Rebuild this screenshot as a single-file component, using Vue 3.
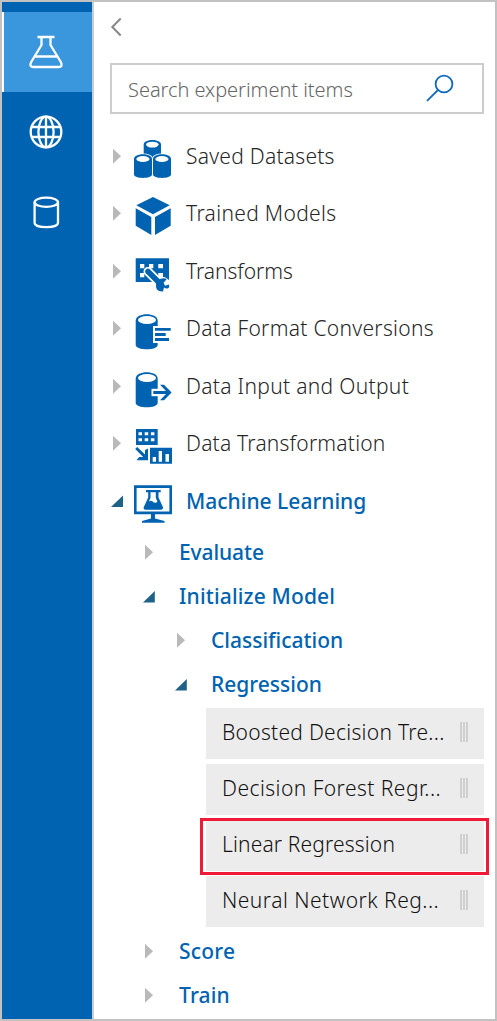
<script setup>
const categories = [
  { label: 'Saved Datasets', icon: 'datasets', ls: 0.25 },
  { label: 'Trained Models', icon: 'cube', ls: 0.32 },
  { label: 'Transforms', icon: 'wrench', ls: -0.05 },
  { label: 'Data Format Conversions', icon: 'format', ls: 0.29 },
  { label: 'Data Input and Output', icon: 'output', ls: 0.31 },
  { label: 'Data Transformation', icon: 'transform', ls: 0.2 },
  { label: 'Machine Learning', icon: 'monitor', ls: 0, open: true },
]
const branches = [
  { label: 'Evaluate', level: 1, ls: -0.1 },
  { label: 'Initialize Model', level: 1, ls: 0.15, open: true },
  { label: 'Classification', level: 2, ls: 0 },
  { label: 'Regression', level: 2, ls: 0, open: true },
]
const modules = [
  { label: 'Boosted Decision Tre...', ls: 0.28 },
  { label: 'Decision Forest Regr...', ls: 0.46 },
  { label: 'Linear Regression', ls: 0.15, marked: true },
  { label: 'Neural Network Reg...', ls: 0.48 },
]
const tail = [
  { label: 'Score', level: 1, ls: 0.2 },
  { label: 'Train', level: 1, ls: 0.15 },
]
</script>

<template>
  <div class="frame">
    <nav class="rail">
      <div class="tab active">
        <svg width="40" height="40" viewBox="0 0 40 40" class="line">
          <path d="M11.500 5H28.500M15.500 5V13L5.200 30Q2.800 34.800 7.500 35H32.500Q37.200 34.800 34.800 30L24.500 13V5M9 24.500H31" />
        </svg>
      </div>
      <div class="tab">
        <svg width="40" height="40" viewBox="0 0 40 40" class="line">
          <circle cx="20" cy="20" r="15.300" />
          <ellipse cx="20" cy="20" rx="7.600" ry="15.300" />
          <path d="M20 4.700V35.300M6 15H34M6 25H34" />
        </svg>
      </div>
      <div class="tab">
        <svg width="40" height="40" viewBox="0 0 40 40" class="line">
          <ellipse cx="20.300" cy="10.200" rx="11.700" ry="4.600" />
          <path d="M8.600 10.200V31C8.600 36.500 32 36.500 32 31V10.200" />
        </svg>
      </div>
    </nav>

    <main class="panel">
      <svg class="back" width="14" height="20" viewBox="0 0 14 20"><path d="M10.700 1.500L2.300 10L10.700 18.500" /></svg>
      <div class="search">
        <span>Search experiment items</span>
        <svg width="30" height="30" viewBox="0 0 30 30"><circle cx="19" cy="11" r="8.400" /><path d="M13 17L2 27.800" /></svg>
      </div>

      <div v-for="c in categories" :key="c.label" class="row" :class="{ open: c.open }">
        <svg class="caret" width="14" height="16" viewBox="0 0 14 16">
          <path v-if="c.open" d="M0 14L12 2.500V14Z" /><path v-else d="M2 .8L10 8.300L2 15.800Z" />
        </svg>
        <svg class="icon" width="42" height="44" viewBox="0 0 42 44">
          <g v-if="c.icon === 'datasets'">
            <path d="M11.700 8.500C11.700 2.500 29 2.500 29 8.500V22H11.700Z" />
            <ellipse class="w" cx="20.300" cy="8.600" rx="6.300" ry="2.900" />
            <path class="edge" d="M2 23C2 16.700 20 16.700 20 23V38.500C20 43 2 43 2 38.500Z" />
            <path class="edge" d="M21 23C21 16.700 39 16.700 39 23V38.500C39 43 21 43 21 38.500Z" />
            <ellipse class="w" cx="10.900" cy="23" rx="6.600" ry="3" />
            <ellipse class="w" cx="29.900" cy="23" rx="6.600" ry="3" />
          </g>
          <g v-else-if="c.icon === 'cube'">
            <path d="M4.300 12.300L21 4L37.700 12.300L21 21.300ZM3.700 15.300L19.300 24V42L3.700 32.700ZM38.700 15.300L23 24V42L38.700 32.700Z" />
          </g>
          <g v-else-if="c.icon === 'wrench'">
            <path d="M3.700 7.300H37V31H3.700Z" />
            <path class="w" d="M8 13H12.300V17.300H8ZM17 13H21.300V17.300H17ZM26.300 13H31V17.300H26.300ZM8 22H12.300V26.300H8ZM26.300 22H31V26.300H26.300Z" />
            <path class="halo" d="M16 20.500L28 32.500" />
            <path class="w" d="M22 32C24 25 32 23 38 30V42H24Z" />
            <path class="handle" d="M16 20.500L28 32.500" />
            <path d="M25.500 29.500Q31 25.800 34.800 28L31.600 31.700L33 34.800L37 33.600Q38 38.500 33.500 37.300L32 36.500L31 40.500Q23.500 41 24 34Q24 31 25.500 29.500Z" />
          </g>
          <g v-else-if="c.icon === 'format'">
            <path d="M3.700 12.500C3.700 4 25.700 4 25.700 12.500V37C25.700 42.700 3.700 42.700 3.700 37Z" />
            <ellipse class="w" cx="15" cy="12" rx="9" ry="4" />
            <path class="w" d="M21 18H41V35H21Z" />
            <path d="M23 20H38.700V22.800H23ZM23 25H33.700V28H23ZM23 30H37V33H23Z" />
          </g>
          <g v-else-if="c.icon === 'output'">
            <path d="M3.700 12.500C3.700 4 25.700 4 25.700 12.500V37C25.700 42.700 3.700 42.700 3.700 37Z" />
            <ellipse class="w" cx="15" cy="12" rx="9" ry="4" />
            <path class="w" d="M19.500 22.800H28V30.200H19.500Z" />
            <path d="M21.300 25H34L28 18.800H32L39.600 26.500L32 34.300H28L34 28.100H21.300Z" />
          </g>
          <g v-else-if="c.icon === 'transform'">
            <path d="M4 6H25.700V22H4ZM18 24.700H40V40.800H18Z" />
            <path class="w" d="M6.500 9.300H10V12.300H6.500ZM12.700 9.300H16.200V12.300H12.700ZM18.900 9.300H22.400V12.300H18.900ZM6.500 15.300H10V18.300H6.500ZM12.700 15.300H16.200V18.300H12.700ZM18.900 15.300H22.400V18.300H18.900ZM20.700 34H24V38.700H20.700ZM26.700 28H30V38.700H26.700ZM33.500 31H37V38.700H33.500Z" />
            <path d="M3.200 26L5.200 24L13 31.500V27L16 25.500V37.300H4.500L7.200 34H11.200Z" />
          </g>
          <g v-else>
            <path fill-rule="evenodd" d="M2 4.300H40V33.300H2ZM4.600 7V30.600H37.400V7Z" />
            <path d="M19 33H23V37.500L32.500 40V41.800H10V40L19 37.500Z" />
            <path d="M14 9H28.700V11.300H26.500V16.500L31 26.300Q31.300 28.700 29 28.700H13.500Q11.200 28.700 11.700 26.300L16.200 16.500V11.300H14Z" />
            <path class="w" d="M18.500 11.300H23.800V17L25.500 20.700Q23 22.800 20.700 20.500Q18.700 18.900 16.800 20.500L18.500 17Z" />
          </g>
        </svg>
        <span class="label" :style="{ letterSpacing: c.ls + 'px' }">{{ c.label }}</span>
      </div>

      <div v-for="b in branches" :key="b.label" class="sub" :class="['l' + b.level, { open: b.open }]">
        <svg class="caret" width="14" height="16" viewBox="0 0 14 16">
          <path v-if="b.open" d="M0 14.500L11.800 3V14.500Z" /><path v-else d="M2 .8L10 8.300L2 15.800Z" />
        </svg>
        <span class="label" :style="{ letterSpacing: b.ls + 'px' }">{{ b.label }}</span>
      </div>

      <div class="cards">
        <div v-for="m in modules" :key="m.label" class="card" :class="{ marked: m.marked }">
          <span :style="{ letterSpacing: m.ls + 'px' }">{{ m.label }}</span>
          <span class="grip"><i></i><i></i><i></i></span>
        </div>
      </div>

      <div v-for="b in tail" :key="b.label" class="sub l1">
        <svg class="caret" width="14" height="16" viewBox="0 0 14 16"><path d="M2 .8L10 8.300L2 15.800Z" /></svg>
        <span class="label" :style="{ letterSpacing: b.ls + 'px' }">{{ b.label }}</span>
      </div>
    </main>
  </div>
</template>

<style scoped>
.frame {
  box-sizing: border-box;
  width: 497px;
  height: 1021px;
  border: 2px solid #c2c2c2;
  background: #fff;
  display: flex;
  overflow: hidden;
  font: 350 21px/30px "Noto Sans", "Open Sans", sans-serif;
  color: #262626;
  white-space: nowrap;
}
.rail {
  box-sizing: border-box;
  flex: none;
  width: 92px;
  padding-top: 10px;
  background: #0063b1;
  border-right: 2px solid #ccc;
}
.tab {
  box-sizing: border-box;
  height: 80px;
  display: flex;
  align-items: center;
  padding-left: 24px;
}
.tab.active {
  background: #3a96dd;
  border-left: 2px solid #fff;
  padding-left: 22px;
}
.line { fill: none; stroke: #fff; stroke-width: 2.300; }
.panel { flex: 1; min-width: 0; }
.back { display: block; margin: 15px 0 26px 16px; }
.back path { fill: none; stroke: #888; stroke-width: 2; }
.search {
  box-sizing: border-box;
  width: 374px;
  height: 51px;
  margin: 0 0 14px 16px;
  padding: 0 27px 0 16px;
  border: 2px solid #ccc;
  display: flex;
  align-items: center;
  justify-content: space-between;
  font-size: 20px;
  letter-spacing: -0.04px;
  color: #666;
}
.search span { margin-top: 2px; }
.search svg { fill: none; stroke: #0f6cbd; stroke-width: 1.8; margin-top: -2px; }
.row { height: 57px; display: flex; align-items: flex-start; padding-left: 17px; }
.row:nth-of-type(odd) { height: 58px; }
.row .caret { margin-top: 20px; }
.row .icon { margin: 8px 0 0 7px; fill: #0063b1; }
.row .label { margin: 13px 0 0 12px; }
.caret { flex: none; fill: #b9b9b9; }
.icon { flex: none; }
.open .caret { fill: #1e6387; }
.w { fill: #fff; }
.edge { stroke: #fff; stroke-width: 1.8; paint-order: stroke; }
.halo { stroke: #fff; stroke-width: 9; stroke-linecap: round; }
.handle { stroke: #0063b1; stroke-width: 5.500; stroke-linecap: round; }
.open .label, .sub .label { font-weight: 550; color: #0063b1; }
.sub { height: 44px; display: flex; align-items: center; }
.sub .label { margin: -1px 0 0 22px; }
.l1 { padding-left: 49px; }
.l2 { padding-left: 81px; }
.cards {
  width: 278px;
  margin: 2px 0 2px 112px;
  display: flex;
  flex-direction: column;
  gap: 5px;
}
.card {
  position: relative;
  box-sizing: border-box;
  height: 51px;
  padding: 0 16px 4px 16px;
  background: #ececec;
  color: #111;
  display: flex;
  align-items: center;
  justify-content: space-between;
}
.marked::after {
  content: "";
  position: absolute;
  inset: -2px -5px -4px -6px;
  border: 3px solid #f01a38;
}
.grip { display: flex; gap: 1px; }
.grip i { width: 2px; height: 20px; background: #cfcfcf; }
</style>
